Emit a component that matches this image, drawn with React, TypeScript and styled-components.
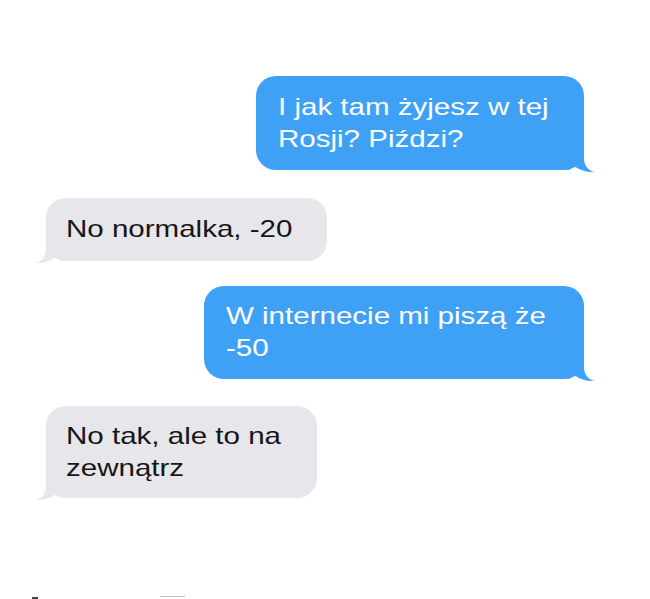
import React from "react";
import styled, { createGlobalStyle } from "styled-components";

const Global = createGlobalStyle`
  html, body { margin: 0; padding: 0; background: #ffffff; }
  body { width: 650px; height: 599px; overflow: hidden; font-family: "Liberation Sans", Arial, sans-serif; }
`;

const Page = styled.div`
  width: 650px;
  height: 599px;
  box-sizing: border-box;
  padding-top: 76px;
  display: flex;
  flex-direction: column;
`;

const Row = styled.div<{ $me: boolean; $mt: number }>`
  display: flex;
  justify-content: ${(p) => (p.$me ? "flex-end" : "flex-start")};
  padding: ${(p) => (p.$me ? "0 66px 0 0" : "0 0 0 46px")};
  margin-top: ${(p) => p.$mt}px;
`;

const Bubble = styled.div<{ $me: boolean; $w: number; $pt: number; $pb: number }>`
  position: relative;
  box-sizing: border-box;
  width: ${(p) => p.$w}px;
  padding: ${(p) => p.$pt}px 0 ${(p) => p.$pb}px ${(p) => (p.$me ? 22 : 20)}px;
  border-radius: 20px;
  background: ${(p) => (p.$me ? "#3fa1f6" : "#e6e6eb")};
  color: ${(p) => (p.$me ? "#ffffff" : "#161616")};
  font-size: 24px;
  line-height: 32px;
`;

const Line = styled.span`
  display: block;
  white-space: nowrap;
  transform: scaleX(1.23);
  transform-origin: 0 50%;
`;

const TailSvg = styled.svg<{ $me: boolean }>`
  position: absolute;
  bottom: -3px;
  width: 26px;
  height: 24px;
  ${(p) => (p.$me ? "right: -10px;" : "left: -10px; transform: scaleX(-1);")}
`;

const Footer = styled.div`
  margin-top: auto;
  height: 3px;
  display: flex;
  align-items: flex-end;
  padding-left: 32px;
`;

const Mark = styled.span<{ $w: number; $h: number; $c: string; $ml: number }>`
  display: block;
  width: ${(p) => p.$w}px;
  height: ${(p) => p.$h}px;
  background: ${(p) => p.$c};
  margin-left: ${(p) => p.$ml}px;
  align-self: ${(p) => (p.$h > 1 ? "flex-end" : "flex-start")};
`;

function Tail({ me, color }: { me: boolean; color: string }) {
  return (
    <TailSvg $me={me} viewBox="0 0 26 24">
      <path
        d="M0 21 L0 0 L16 0 L16 9 C16 16 19 20.5 26 23 C20 23.5 12 21.5 6 17 C4 19 2 21 0 21 Z"
        fill={color}
      />
    </TailSvg>
  );
}

type Msg = { me: boolean; lines: string[]; w: number; mt: number; pt: number; pb: number };

const messages: Msg[] = [
  { me: true, lines: ["I jak tam żyjesz w tej", "Rosji? Piździ?"], w: 328, mt: 0, pt: 15, pb: 15 },
  { me: false, lines: ["No normalka, -20"], w: 281, mt: 28, pt: 15, pb: 16 },
  { me: true, lines: ["W internecie mi piszą że", "-50"], w: 380, mt: 25, pt: 14, pb: 15 },
  { me: false, lines: ["No tak, ale to na", "zewnątrz"], w: 271, mt: 27, pt: 14, pb: 14 },
];

export default function App() {
  return (
    <>
      <Global />
      <Page>
        {messages.map((m, i) => (
          <Row key={i} $me={m.me} $mt={m.mt}>
            <Bubble $me={m.me} $w={m.w} $pt={m.pt} $pb={m.pb}>
              {m.lines.map((l, j) => (
                <Line key={j}>{l}</Line>
              ))}
              <Tail me={m.me} color={m.me ? "#3fa1f6" : "#e6e6eb"} />
            </Bubble>
          </Row>
        ))}
        <Footer>
          <Mark $w={6} $h={2} $c="#444" $ml={0} />
          <Mark $w={25} $h={1} $c="#bdbdbd" $ml={122} />
        </Footer>
      </Page>
    </>
  );
}
